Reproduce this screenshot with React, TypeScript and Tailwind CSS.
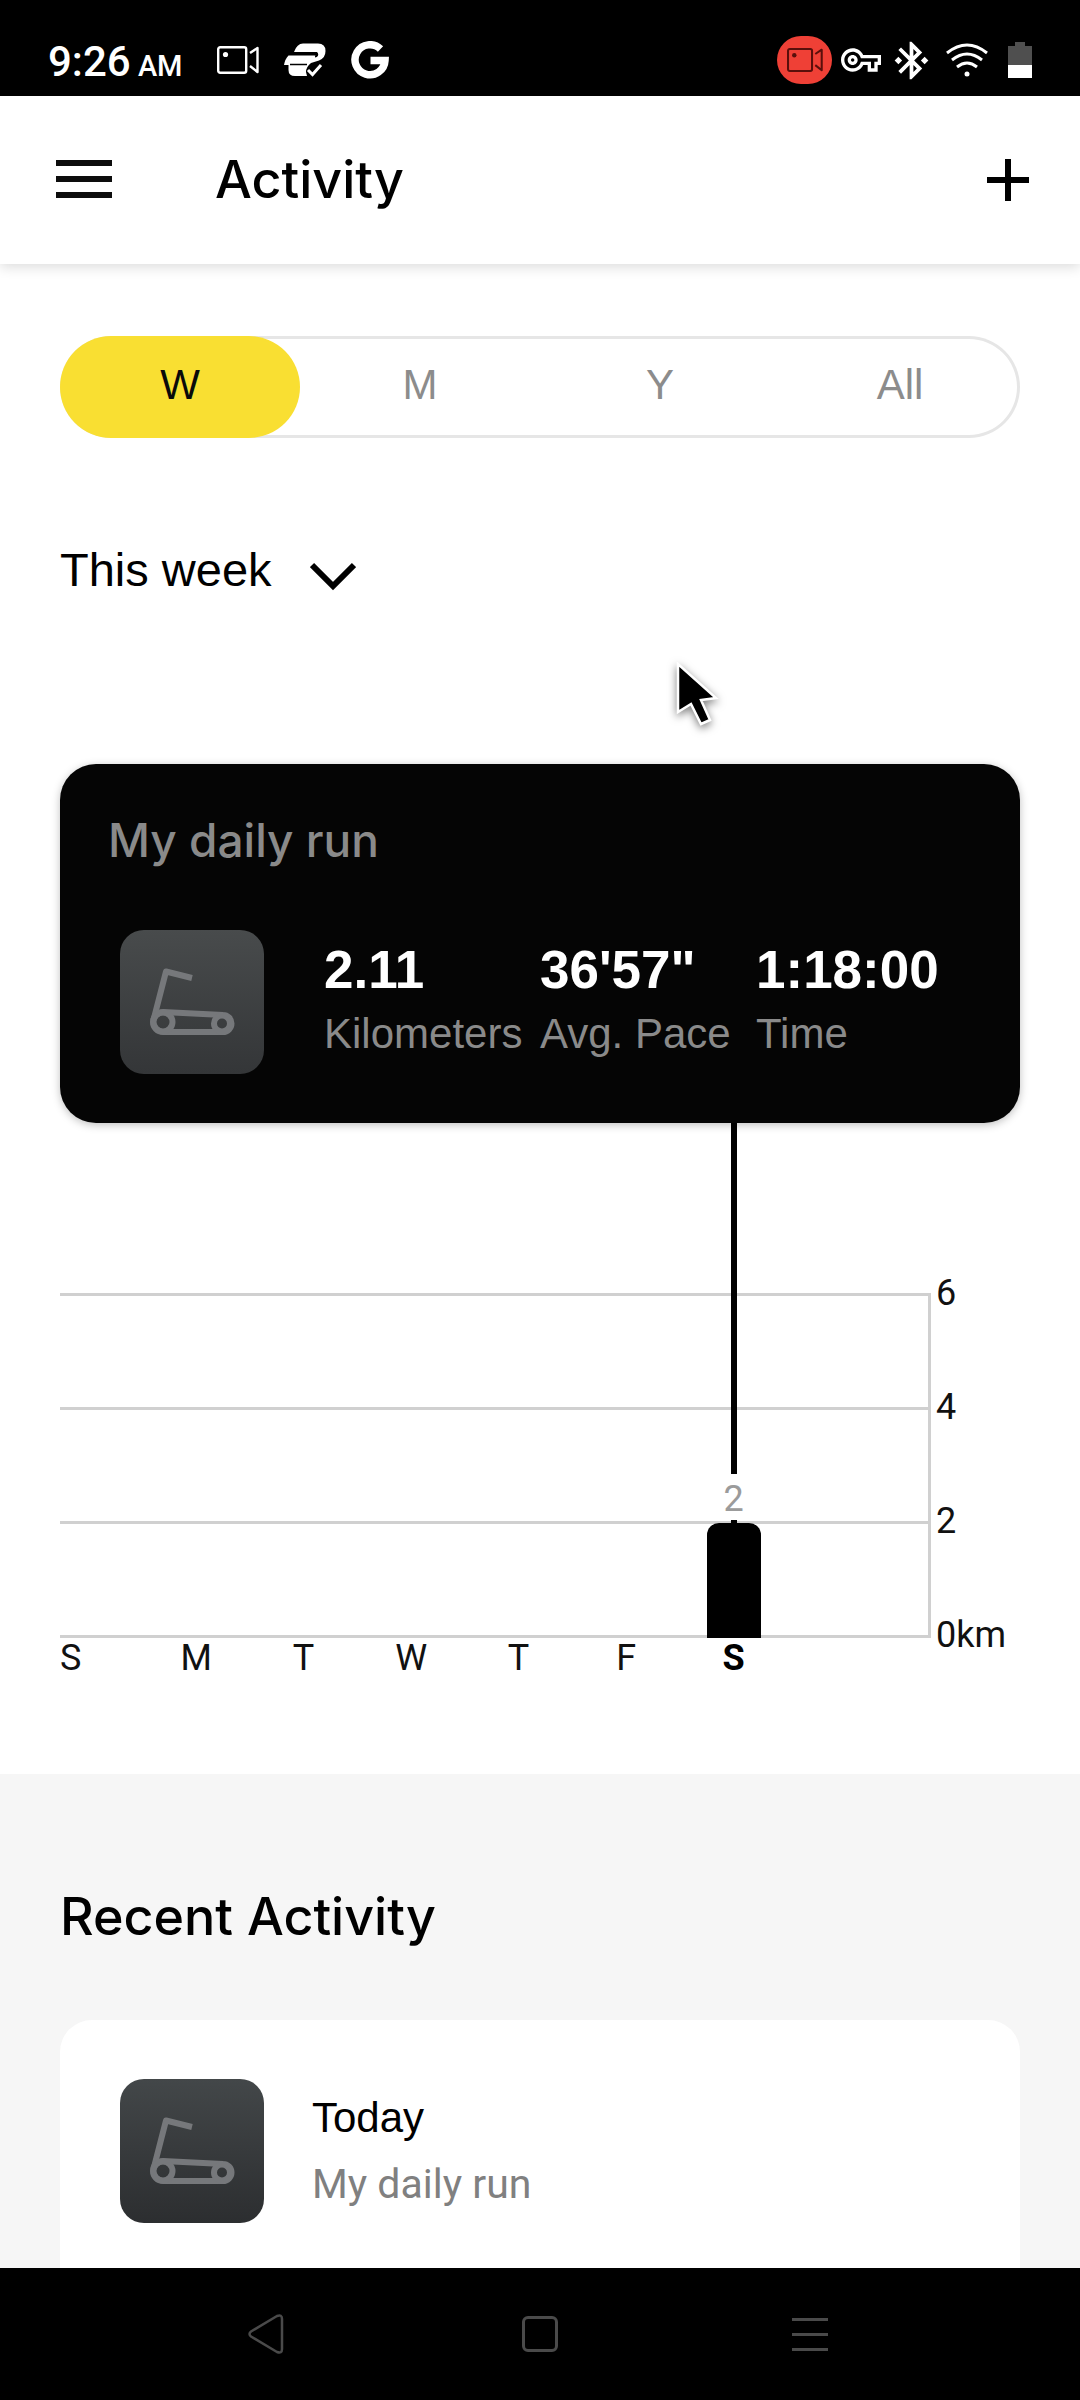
import { MdBluetoothConnected, MdOutlineVpnKey } from "react-icons/md";

const HELV = "font-['Liberation_Sans',Arial,sans-serif]";
const INTER = "font-['Inter',sans-serif]";
const ROBOTO = "font-['Roboto',sans-serif]";

function Camera({ className, dot }: { className: string; dot: string }) {
  return (
    <svg viewBox="0 0 42 28" className={className} fill="none" stroke="currentColor" strokeWidth="2.4" aria-hidden="true">
      <rect x="1.2" y="1.2" width="28" height="25.6" rx="2" />
      <circle cx="8.5" cy="8.5" r="2.6" className={dot} stroke="none" />
      <path d="M33 7 L40.500 2 V26 L33 20" strokeLinejoin="round" />
    </svg>
  );
}

function StatusBar() {
  return (
    <div className={`flex h-24 items-center justify-between bg-black px-12 text-white ${ROBOTO}`}>
      <div className="flex items-center pt-6">
        <p className="pt-2 text-[42px] leading-[48px] font-medium">
          9:26<span className="text-[29px]"> AM</span>
        </p>
        <Camera className="ml-[34px] h-7 w-[42px]" dot="fill-white" />
        <svg viewBox="0 0 42 34" className="ml-[25px] h-[34px] w-[42px]" aria-hidden="true">
          <path
            fill="white"
            d="M10 9 Q13 0.500 19 0.500 H34 Q41.500 0.500 41.500 8 Q41.500 15 35 17.500 L27 20 Q22 24 22 29 L23 33 H11 Q4.500 33 4.500 27 V22 H0 Q1 16 4.500 12.500 H33 V9 Z"
          />
          <path d="M11 10.500 H33 Q34 13 31 13.500" fill="none" stroke="black" strokeWidth="2" />
          <path d="M6 21.500 H23" stroke="black" strokeWidth="1.500" />
          <path d="M24 27 L28.500 31.500 L37 22" fill="none" stroke="white" strokeWidth="3" />
        </svg>
        <svg viewBox="0 0 38 38" className="ml-[25px] size-[38px]" fill="none" stroke="white" strokeWidth="7.5" aria-hidden="true">
          <path d="M29.500 8 A15 15 0 1 0 34 19.500 H19.500" />
        </svg>
      </div>
      <div className="flex items-center pt-6">
        <span className="flex h-12 w-[55px] items-center justify-center rounded-full bg-[#ef4036] text-[#5a0f0b]">
          <Camera className="h-6 w-9" dot="fill-[#5a0f0b]" />
        </span>
        <MdOutlineVpnKey className="ml-[9px] size-10" />
        <MdBluetoothConnected className="ml-2 size-[45px]" />
        <svg viewBox="0 0 42 34" className="ml-3 h-[34px] w-[42px]" fill="none" stroke="white" strokeWidth="3" aria-hidden="true">
          <path d="M1 10 Q21 -6 41 10" />
          <path d="M6 17 Q21 5 36 17" />
          <path d="M11 24 Q21 16 31 24" />
          <circle cx="21" cy="31" r="2.5" fill="white" stroke="none" />
        </svg>
        <svg viewBox="0 0 24 36" className="ml-5 h-9 w-6" aria-hidden="true">
          <path d="M7 0 H17 V4 H24 V23 H0 V4 H7 Z" fill="#4f4f4f" />
          <path d="M0 23 H24 V36 H0 Z" fill="white" />
        </svg>
      </div>
    </div>
  );
}

function Header() {
  return (
    <header className="z-10 flex h-42 items-center bg-white pr-[51px] pl-14 shadow-[0_3px_12px_rgba(0,0,0,0.14)]">
      <button type="button" aria-label="Menu" className="flex w-14 flex-col gap-[10px] pb-[3px]">
        <span className="h-[6px] bg-[#0d0d0d]" />
        <span className="h-[6px] bg-[#0d0d0d]" />
        <span className="h-[6px] bg-[#0d0d0d]" />
      </button>
      <h1 className={`ml-[103px] flex-1 text-[52px] leading-[64px] font-medium ${INTER}`}>Activity</h1>
      <button type="button" aria-label="Add activity">
        <svg viewBox="0 0 42 42" className="size-[42px]" stroke="black" strokeWidth="6" aria-hidden="true">
          <path d="M21 0 V42 M0 21 H42" />
        </svg>
      </button>
    </header>
  );
}

function RangeTabs() {
  return (
    <div role="tablist" className={`flex h-[102px] rounded-full text-[42px] leading-[48px] text-[#8c8c8c] ring-3 ring-[#e6e6e6] ring-inset ${HELV}`}>
      <button type="button" role="tab" aria-selected="true" className="flex-1 rounded-full bg-[#f9df32] pb-1 text-[#0a0a0a]">
        W
      </button>
      <button type="button" role="tab" aria-selected="false" className="flex-1 pb-1">M</button>
      <button type="button" role="tab" aria-selected="false" className="flex-1 pb-1">Y</button>
      <button type="button" role="tab" aria-selected="false" className="flex-1 pb-1">All</button>
    </div>
  );
}

function TreadmillTile({ tone }: { tone: string }) {
  return (
    <div className={`size-36 shrink-0 rounded-3xl bg-linear-to-b ${tone}`}>
      <svg viewBox="0 0 144 144" className="size-full" fill="none" stroke="#76787b" strokeWidth="6" aria-hidden="true">
        <path d="M72 48 L46 41.500 L33.500 90" strokeLinejoin="round" />
        <path d="M43 82 L103 85 A8.500 8.500 0 0 1 103 102 H43 A10 10 0 0 1 43 82 Z" />
        <circle cx="43" cy="92" r="9.500" />
        <circle cx="102" cy="93.500" r="8" />
      </svg>
    </div>
  );
}

const stats = [
  { value: "2.11", label: "Kilometers" },
  { value: "36'57\"", label: "Avg. Pace" },
  { value: "1:18:00", label: "Time" },
];

function RunCard() {
  return (
    <section className="rounded-[36px] bg-[#050505] px-12 pt-12 pb-[49px] shadow-[0_2px_8px_rgba(0,0,0,0.25)]">
      <h2 className={`text-[46px] leading-[56px] font-medium text-[#8a8a8a] ${INTER}`}>My daily run</h2>
      <div className="mt-[62px] ml-3 flex items-center gap-15">
        <TreadmillTile tone="from-[#484b4c] to-[#343638]" />
        <dl className={`grid flex-1 grid-cols-3 leading-[64px] whitespace-nowrap ${HELV}`}>
          {stats.map((s) => (
            <div key={s.label} className="flex flex-col-reverse">
              <dt className="text-[42px] text-[#8a8a8a]">{s.label}</dt>
              <dd className="text-[53px] font-bold text-white">{s.value}</dd>
            </div>
          ))}
        </dl>
      </div>
    </section>
  );
}

const COLUMNS = "grid grid-cols-[82fr_107fr_107fr_107fr_107fr_107fr_107fr_143fr]";

function Chart() {
  return (
    <section aria-label="Kilometers per day" className={`flex pb-[82px] text-4xl text-[#111] ${ROBOTO}`}>
      <div className="flex-1">
        <div className="grid h-[515px]">
          <div className="col-start-1 row-start-1 flex h-[345px] flex-col justify-between self-end border-r-3 border-[#d0d0d0]">
            <span className="h-[3px] bg-[#d0d0d0]" />
            <span className="h-[3px] bg-[#d0d0d0]" />
            <span className="h-[3px] bg-[#d0d0d0]" />
            <span className="h-[3px] bg-[#d0d0d0]" />
          </div>
          <div className={`z-10 col-start-1 row-start-1 ${COLUMNS}`}>
            <div className="col-start-7 flex flex-col items-center">
              <span className="w-[6px] flex-1 bg-black" />
              <span className="pt-1 text-4xl leading-[42px] text-[#9b9b9b]">2</span>
              <span className="h-[3px] w-[6px] bg-black" />
              <span className="h-[115px] w-[54px] rounded-t-xl bg-black" />
            </div>
          </div>
        </div>
        <div className={`text-center leading-[40px] ${COLUMNS}`}>
          <span className="text-left">S</span>
          <span>M</span>
          <span>T</span>
          <span>W</span>
          <span>T</span>
          <span>F</span>
          <span className="font-bold text-black">S</span>
        </div>
      </div>
      <div className="flex w-[89px] flex-col pt-[113px] pl-[5px] leading-[114px]">
        <span>6</span>
        <span>4</span>
        <span>2</span>
        <span>0km</span>
      </div>
    </section>
  );
}

function Cursor() {
  return (
    <svg viewBox="0 0 44 66" className="absolute top-[398px] left-[676px] h-[66px] w-11 drop-shadow-[0_3px_4px_rgba(0,0,0,0.5)]" aria-hidden="true">
      <path
        d="M2 2 V50 L15 42 L25 62 L34 58 L25 38 L40 36 Z"
        fill="black"
        stroke="white"
        strokeWidth="2.5"
      />
    </svg>
  );
}

function NavBar() {
  return (
    <nav className="grid h-33 grid-cols-[403fr_274fr_403fr] items-center bg-black text-[#4a4a4a]">
      <button type="button" aria-label="Back" className="ml-[248px] justify-self-start">
        <svg viewBox="0 0 36 40" className="h-10 w-9" fill="none" stroke="currentColor" strokeWidth="2.5" strokeLinejoin="round" aria-hidden="true">
          <path d="M3 17.500 L29 2 Q34 0 34 5 V35 Q34 40 29 38 L3 22.500 Q0 20 3 17.500 Z" />
        </svg>
      </button>
      <button type="button" aria-label="Home" className="size-9 justify-self-center rounded-md border-3 border-[#4a4a4a]" />
      <button type="button" aria-label="Recent apps" className="mr-[252px] flex w-9 flex-col gap-3 justify-self-end">
        <span className="h-[3px] bg-[#4a4a4a]" />
        <span className="h-[3px] bg-[#4a4a4a]" />
        <span className="h-[3px] bg-[#4a4a4a]" />
      </button>
    </nav>
  );
}

export default function App() {
  return (
    <div className="flex min-h-screen flex-col bg-white text-black">
      <StatusBar />
      <Header />
      <main className="relative flex flex-1 flex-col">
        <div className="px-15 pt-18">
          <RangeTabs />
          <button type="button" className={`mt-[102px] flex items-center gap-[38px] text-[47px] leading-[60px] ${HELV}`}>
            This week
            <svg viewBox="0 0 46 30" className="mt-3 h-[30px] w-[46px]" fill="none" stroke="black" strokeWidth="6" aria-hidden="true">
              <path d="M2 4 L23 25 L44 4" />
            </svg>
          </button>
          <div className="mt-[164px]">
            <RunCard />
          </div>
          <Chart />
        </div>
        <Cursor />
        <section className="flex flex-1 flex-col bg-[#f6f6f6] px-15 pt-[111px]">
          <h2 className={`text-[52px] leading-[64px] font-medium ${INTER}`}>Recent Activity</h2>
          <article className="mt-[71px] flex flex-1 items-start gap-12 rounded-t-[32px] bg-white px-15 pt-[59px]">
            <TreadmillTile tone="from-[#434749] to-[#2c2e30]" />
            <div className="pt-[6px] leading-[66px]">
              <h3 className={`text-[42px] ${HELV}`}>Today</h3>
              <p className={`text-[41px] text-[#808080] ${ROBOTO}`}>My daily run</p>
            </div>
          </article>
        </section>
      </main>
      <NavBar />
    </div>
  );
}
